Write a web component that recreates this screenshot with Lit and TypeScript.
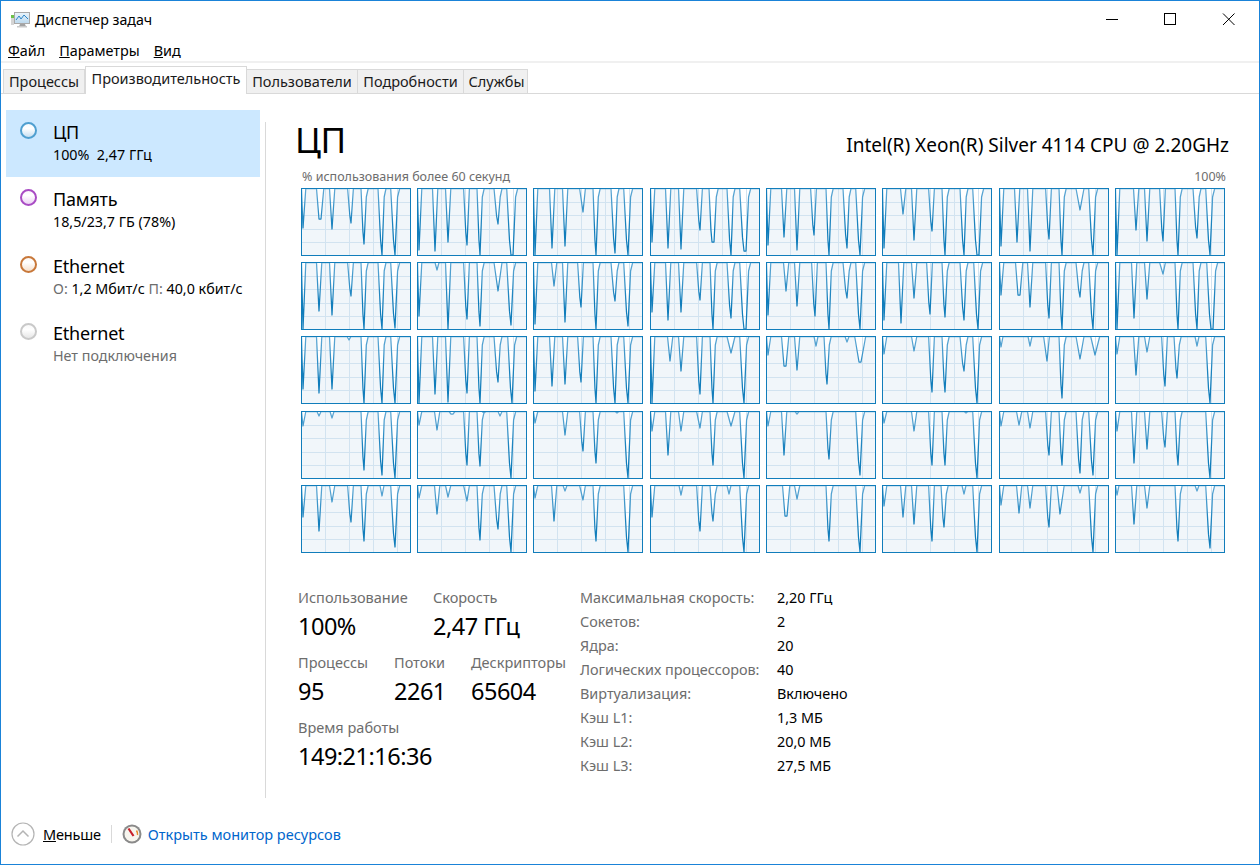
import { LitElement, html, css, svg } from 'lit';
import { customElement } from 'lit/decorators.js';

// every chart is a list of dips: [x, depth, flat bottom width]
type Dip = [number, number, number?];

const CHARTS: Dip[][] = [
  [[2,40],[18,31,2],[31,41],[50,35],[63,56],[81,67],[94,67]],
  [[2,62],[18,63],[31,54],[50,57],[63,67],[81,36],[94,67,2]],
  [[2,67],[19,60],[32,58],[50,24],[63,67],[82,65],[95,67]],
  [[2,54],[18,60],[31,61],[50,42],[62,54,2],[81,67],[94,63,2]],
  [[2,57],[18,49],[31,62],[48,47],[63,67],[81,60],[94,67]],
  [[2,60],[21,26],[32,52],[50,43],[63,67],[82,67],[95,67,2]],
  [[2,58],[18,54],[31,63],[50,51],[63,67],[81,22],[94,67]],
  [[2,67],[21,42],[32,53],[48,53],[63,67],[82,50],[95,67]],

  [[2,67],[18,49],[31,53],[50,34],[63,67],[81,67],[94,66]],
  [[2,54],[20,8],[31,67],[50,57],[63,64],[81,29],[94,63]],
  [[2,62],[21,24],[32,60],[48,45],[63,67],[82,39],[95,64]],
  [[2,50],[18,58],[31,50],[50,38],[63,67],[81,56],[94,67,2]],
  [[2,53],[20,29],[31,44],[49,54],[63,67],[81,36],[94,67]],
  [[2,58],[19,61],[32,36],[48,52],[63,55],[82,58],[96,67]],
  [[2,33],[19,33,2],[31,45],[50,56],[63,67],[81,35],[94,67]],
  [[2,67],[19,56],[32,37],[48,12],[63,67],[82,67],[96,67,2]],

  [[2,53],[18,57],[31,53],[48,4],[63,67],[81,67],[94,67]],
  [[2,67],[18,58],[31,66],[50,57],[63,67],[81,46],[95,67]],
  [[2,55],[19,50],[32,48],[48,46],[63,67],[82,67],[95,67]],
  [[2,67],[20,25],[31,35],[50,58],[63,67],[81,17],[94,67]],
  [[2,19],[18,30,2],[31,34],[50,10],[61,48],[81,6],[93,26,2]],
  [[2,18],[32,15],[50,56],[63,56],[82,35],[95,67]],
  [[2,11],[31,10],[48,25],[63,62],[81,23],[96,19]],
  [[2,18],[21,39],[32,16],[50,50],[62,42],[82,10],[95,67]],

  [[2,15],[18,5],[31,7],[63,59],[81,64],[94,67]],
  [[2,14],[20,19],[34,3,2],[50,54],[63,55],[67,2],[83,5],[94,67]],
  [[2,12],[32,24],[50,40],[63,52],[84,2],[95,67]],
  [[2,20],[18,44],[31,20],[50,17],[63,54],[81,15],[94,67]],
  [[2,15],[18,44],[31,3],[63,48],[94,64]],
  [[2,12],[32,20],[50,54],[63,54],[84,2],[95,67]],
  [[2,15],[20,14],[31,17],[50,44],[63,54],[81,62],[94,64]],
  [[2,20],[19,52],[32,38],[50,36],[63,54],[95,67]],

  [[2,32],[18,46],[31,17],[50,37],[63,56],[81,11],[94,62]],
  [[2,13],[20,29],[31,12],[50,16],[63,55],[81,44],[94,67]],
  [[2,13],[21,36],[32,6],[50,15],[63,56],[95,67]],
  [[2,32],[31,10],[50,46],[63,36],[79,9],[94,67]],
  [[19,31,2],[31,14],[63,56],[94,67]],
  [[2,21],[21,32],[32,39],[50,56],[62,42],[82,9],[95,67]],
  [[2,20],[20,28],[31,23],[50,42],[61,29],[81,8],[94,67]],
  [[2,10],[19,39],[32,23],[63,56],[82,6],[95,63]],
];

// dips get wider towards the right of the chart, shallow ones stay narrow
const dipWidth = (x: number, d: number): [number, number] => {
  if (d < 12) return [2, 2];
  if (x < 40) return [2.5, 2.8];
  if (x < 56) return [3.4, 2.4];
  if (x < 75) return [3, 4.2];
  if (x < 90) return [4, 4];
  return [4.3, 4.7];
};

const linePoints = (dips: Dip[]) => {
  const pts: [number, number][] = [[0.5, 0.5]];
  for (const [x, d, flat = 0] of dips) {
    const [l, r] = dipWidth(x, d);
    if (x - l > 1) pts.push([x - l, 0.5]);
    if (l >= 3 && d >= 30) pts.push([x - l * 0.35, d * 0.78]);
    pts.push([x, d]);
    if (flat) pts.push([x + flat, d]);
    if (r >= 4 && d >= 30) pts.push([x + flat + r * 0.55, 9]);
    pts.push([x + flat + r, 0.5]);
  }
  pts.push([109.5, 0.5]);
  return pts;
};

@customElement('cpu-chart')
class CpuChart extends LitElement {
  static properties = { dips: { attribute: false } };
  dips: Dip[] = [];

  static styles = css`
    :host { display: block; width: 110px; height: 68px; }
    svg { display: block; }
    .area { fill: #f1f6fa; }
    .grid { stroke: #d2e3f0; stroke-width: 1; }
    .line { fill: none; stroke: url(#fade); stroke-width: 1.25; stroke-linejoin: round; }
    .frame { fill: none; stroke: #117dbb; stroke-width: 1; }
  `;

  render() {
    const pts = linePoints(this.dips);
    const line = pts.map((p) => p.join(',')).join(' ');
    const area = `0.5,67.5 ${line} 109.5,67.5`;
    return html`<svg width="110" height="68" viewBox="0 0 110 68">
      <defs>
        <linearGradient id="fade" gradientUnits="userSpaceOnUse" x1="0" y1="0" x2="0" y2="40">
          <stop offset="0" stop-color="#62aad6"></stop>
          <stop offset="1" stop-color="#117dbb"></stop>
        </linearGradient>
      </defs>
      <rect width="110" height="68" fill="#fff"></rect>
      <polygon class="area" points=${area}></polygon>
      ${[24, 48, 72, 96].map((x) => svg`<line class="grid" x1=${x + 0.5} x2=${x + 0.5} y1="1" y2="67"></line>`)}
      ${[14, 27, 41, 54].map((y) => svg`<line class="grid" x1="1" x2="109" y1=${y + 0.5} y2=${y + 0.5}></line>`)}
      <polyline class="line" points=${line}></polyline>
      <rect class="frame" x="0.5" y="0.5" width="109" height="67"></rect>
    </svg>`;
  }
}

@customElement('app-root')
class AppRoot extends LitElement {
  static styles = css`
    :host {
      display: block;
      width: 1260px;
      height: 865px;
      font-family: "Noto Sans", "Open Sans", sans-serif;
      color: #000;
      overflow: hidden;
    }
    * { box-sizing: border-box; }
    .window {
      height: 865px;
      display: flex;
      flex-direction: column;
      background: #fff;
      border: 1px solid #1a83d8;
    }
    .titlebar {
      height: 37px;
      display: flex;
      align-items: center;
      padding-left: 9px;
      flex: none;
    }
    .title { margin-left: 5px; font-size: 14.2px; }
    .caption { margin-left: auto; display: flex; align-items: center; }
    .caption svg { display: block; }
    .menu {
      height: 23px;
      display: flex;
      gap: 14px;
      align-items: center;
      padding: 2px 0 0 7px;
      font-size: 14.4px;
      flex: none;
    }
    .menu-rule { height: 2px; background: #f0f0f0; flex: none; }
    .tabs {
      height: 31px;
      flex: none;
      display: flex;
      align-items: flex-end;
      padding-left: 2px;
      border-bottom: 1px solid #d9d9d9;
    }
    .tab {
      height: 24px;
      background: #f0f0f0;
      border: 1px solid #d9d9d9;
      border-bottom: none;
      border-left: none;
      font-size: 14.5px;
      padding: 0 4px 2px;
      display: flex;
      align-items: center;
      justify-content: center;
      color: #1a1a1a;
      white-space: nowrap;
    }
    .tab:first-child { border-left: 1px solid #d9d9d9; }
    .tab.active {
      height: 28px;
      background: #fff;
      border-left: 1px solid #d9d9d9;
      margin-bottom: -1px;
      padding-bottom: 5px;
    }
    .tab.p { width: 82px; }
    .tab.w { width: 162px; }
    .tab.u { width: 111px; }
    .tab.d { width: 106px; }
    .tab.s { width: 64px; padding-left: 6px; }
    .body { flex: 1; display: flex; min-height: 0; }
    .side {
      width: 264px;
      flex: none;
      padding: 16px 0 0 5px;
      display: flex;
      flex-direction: column;
    }
    .item {
      width: 254px;
      height: 67px;
      flex: none;
      display: flex;
      padding: 10px 0 0 14px;
    }
    .item.selected { background: #cce8ff; }
    .dot {
      width: 17px;
      height: 17px;
      margin-top: 2px;
      border-radius: 50%;
      border: 2px solid;
      flex: none;
    }
    .dot.cpu { border-color: #4f9fd0; background: linear-gradient(180deg, #f6fafd, #fff 35%, #c6dff1); }
    .dot.mem { border-color: #a94cc4; background: linear-gradient(180deg, #fbf6fc, #fff 35%, #ecd2f4); }
    .dot.net { border-color: #c8783a; background: linear-gradient(180deg, #fdf8f4, #fff 35%, #f6e0cd); }
    .dot.off { border-color: #c9c9c9; background: linear-gradient(180deg, #f8f8f8, #fff 35%, #e6e6e6); }
    .item-text { margin-left: 16px; }
    .item-name { font-size: 18px; line-height: 24px; letter-spacing: -0.2px; }
    .item-sub { font-size: 14.3px; line-height: 20px; margin-top: 1px; white-space: nowrap; }
    .muted { color: #6d6d6d; }
    .main {
      flex: 1;
      min-width: 0;
      margin-top: 28px;
      border-left: 1px solid #d9d9d9;
      height: 676px;
      padding-left: 31px;
      display: flex;
      flex-direction: column;
    }
    .head {
      display: flex;
      justify-content: space-between;
      align-items: flex-start;
      height: 38px;
      width: 932px;
    }
    .head h1 { margin: 0 0 0 -2px; font-weight: 400; font-size: 35px; line-height: 36px; letter-spacing: -0.5px; }
    .head span { font-size: 19px; line-height: 24px; margin-top: 11px; white-space: nowrap; }
    .axis {
      display: flex;
      justify-content: space-between;
      width: 929px;
      padding: 0 0 0 5px;
      margin-top: 9px;
      font-size: 12.5px;
      line-height: 16px;
      color: #6d6d6d;
    }
    .grid {
      margin: 2.8px 0 0 3.6px;
      display: grid;
      grid-template-columns: repeat(8, 110px);
      grid-template-rows: repeat(5, 68px);
      column-gap: 6.33px;
      row-gap: 6.25px;
    }
    .stats { display: flex; margin-top: 35.2px; }
    .live { width: 282px; margin: -1px 0 0 1px; flex: none; display: flex; flex-direction: column; }
    .live-row { display: flex; height: 65px; }
    .stat { display: flex; flex-direction: column; }
    .stat label { font-size: 14.5px; line-height: 20px; color: #6d6d6d; white-space: nowrap; }
    .stat b { font-weight: 400; font-size: 23.5px; line-height: 34px; margin-top: 2px; letter-spacing: -0.5px; white-space: nowrap; }
    .specs {
      display: grid;
      grid-template-columns: 197px auto;
      grid-auto-rows: 24px;
      align-content: start;
      font-size: 14.4px;
      line-height: 24px;
      margin-top: -2px;
      white-space: nowrap;
    }
    .specs span:nth-child(odd) { color: #6d6d6d; }
    .footer {
      flex: none;
      height: 60px;
      display: flex;
      align-items: center;
      padding-left: 10px;
    }
    .less { margin-left: 8px; font-size: 14.5px; letter-spacing: -0.2px; }
    .sep { width: 1px; height: 18px; background: #d9d9d9; margin: 0 10px; }
    .link { margin-left: 6px; font-size: 14.5px; color: #0066cc; white-space: nowrap; }
    svg { flex: none; }
  `;

  private titleIcon() {
    return html`<svg width="20" height="19" viewBox="0 0 20 19">
      <defs>
        <linearGradient id="scr" x1="0" y1="0" x2="0" y2="1">
          <stop offset="0" stop-color="#eaf4fb"></stop>
          <stop offset="1" stop-color="#bcd9ee"></stop>
        </linearGradient>
      </defs>
      <rect x="1" y="5" width="3" height="10" fill="#d5d5d5"></rect>
      <rect x="1" y="5" width="3" height="3" fill="#6cc24a"></rect>
      <rect x="4.5" y="2.5" width="15" height="11" fill="url(#scr)" stroke="#a9a9a9"></rect>
      <path d="M6 10 L9 6 L11 9 L14 5 L18 9" fill="none" stroke="#2f86c8" stroke-width="1"></path>
      <path d="M10 14h5l1 2.5H9z" fill="#a3a3a3"></path>
      <rect x="7" y="16" width="10" height="1.5" fill="#c9c9c9"></rect>
    </svg>`;
  }

  private captionButtons() {
    return html`<div class="caption">
      <svg width="159" height="20" viewBox="0 0 159 20">
        <path d="M6 9.5h12" stroke="#000" fill="none"></path>
        <rect x="64.5" y="3.5" width="11" height="11" fill="none" stroke="#000"></rect>
        <path d="M123 3.5l11.5 11.5M134.5 3.5L123 15" stroke="#000" fill="none"></path>
      </svg>
    </div>`;
  }

  private sideItem(kind: string, name: string, sub: unknown, selected = false) {
    return html`<div class="item ${selected ? 'selected' : ''}">
      <div class="dot ${kind}"></div>
      <div class="item-text">
        <div class="item-name">${name}</div>
        <div class="item-sub">${sub}</div>
      </div>
    </div>`;
  }

  private stat(label: string, value: string, width: number) {
    return html`<div class="stat" style="width:${width}px"><label>${label}</label><b>${value}</b></div>`;
  }

  render() {
    const specs = [
      ['Максимальная скорость:', '2,20 ГГц'],
      ['Сокетов:', '2'],
      ['Ядра:', '20'],
      ['Логических процессоров:', '40'],
      ['Виртуализация:', 'Включено'],
      ['Кэш L1:', '1,3 МБ'],
      ['Кэш L2:', '20,0 МБ'],
      ['Кэш L3:', '27,5 МБ'],
    ];
    return html`<div class="window">
      <div class="titlebar">
        ${this.titleIcon()}
        <span class="title">Диспетчер задач</span>
        ${this.captionButtons()}
      </div>
      <div class="menu">
        <span><u>Ф</u>айл</span><span><u>П</u>араметры</span><span><u>В</u>ид</span>
      </div>
      <div class="menu-rule"></div>
      <div class="tabs">
        <div class="tab p">Процессы</div>
        <div class="tab w active">Производительность</div>
        <div class="tab u">Пользователи</div>
        <div class="tab d">Подробности</div>
        <div class="tab s">Службы</div>
      </div>
      <div class="body">
        <div class="side">
          ${this.sideItem('cpu', 'ЦП', html`100%&nbsp; 2,47 ГГц`, true)}
          ${this.sideItem('mem', 'Память', '18,5/23,7 ГБ (78%)')}
          ${this.sideItem('net', 'Ethernet', html`<span class="muted">О:</span> 1,2 Мбит/с <span class="muted">П:</span> 40,0 кбит/с`)}
          ${this.sideItem('off', 'Ethernet', html`<span class="muted">Нет подключения</span>`)}
        </div>
        <div class="main">
          <div class="head">
            <h1>ЦП</h1>
            <span>Intel(R) Xeon(R) Silver 4114 CPU @ 2.20GHz</span>
          </div>
          <div class="axis"><span>% использования более 60 секунд</span><span>100%</span></div>
          <div class="grid">
            ${CHARTS.map((dips) => html`<cpu-chart .dips=${dips}></cpu-chart>`)}
          </div>
          <div class="stats">
            <div class="live">
              <div class="live-row">
                ${this.stat('Использование', '100%', 135)}
                ${this.stat('Скорость', '2,47 ГГц', 130)}
              </div>
              <div class="live-row">
                ${this.stat('Процессы', '95', 96)}
                ${this.stat('Потоки', '2261', 77)}
                ${this.stat('Дескрипторы', '65604', 100)}
              </div>
              <div class="live-row">
                ${this.stat('Время работы', '149:21:16:36', 200)}
              </div>
            </div>
            <div class="specs">
              ${specs.map(([k, v]) => html`<span>${k}</span><span>${v}</span>`)}
            </div>
          </div>
        </div>
      </div>
      <div class="footer">
        <svg width="24" height="24" viewBox="0 0 24 24">
          <circle cx="12" cy="12" r="11" fill="#fff" stroke="#b4b4b4" stroke-width="1.2"></circle>
          <path d="M6.5 14.5L12 9l5.5 5.5" fill="none" stroke="#b4b4b4" stroke-width="1.5"></path>
        </svg>
        <span class="less"><u>М</u>еньше</span>
        <span class="sep"></span>
        <svg width="20" height="20" viewBox="0 0 20 20">
          <circle cx="10" cy="10" r="9.5" fill="#8a8a8a"></circle>
          <circle cx="10" cy="10" r="7.5" fill="#f7f5ee"></circle>
          <path d="M14.5 6.5a6 6 0 0 1 1 4.5" fill="none" stroke="#e98b2a" stroke-width="1.5"></path>
          <path d="M6.5 4.5L11.5 12" stroke="#c8202a" stroke-width="2.2"></path>
        </svg>
        <span class="link">Открыть монитор ресурсов</span>
      </div>
    </div>`;
  }
}
